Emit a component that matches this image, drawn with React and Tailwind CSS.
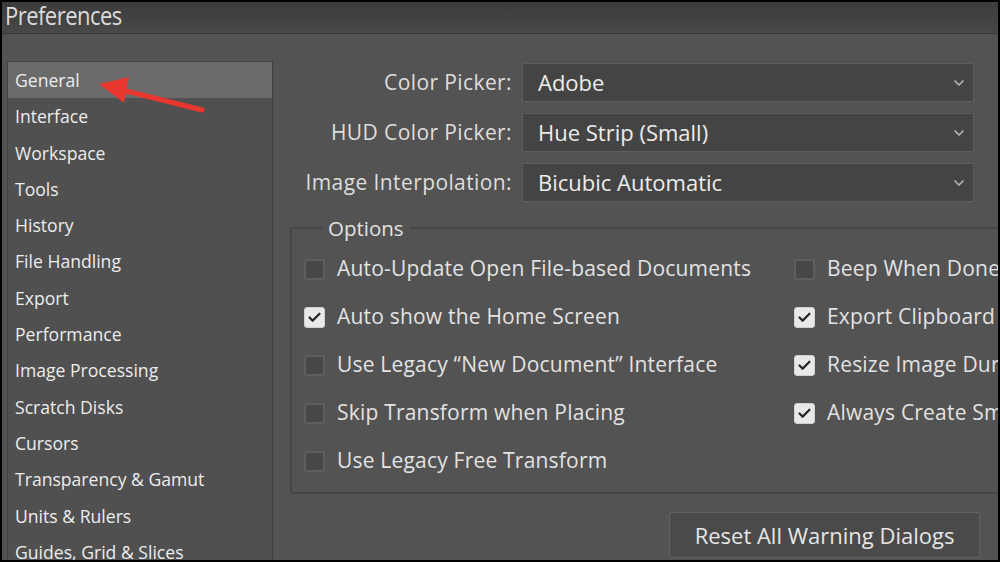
import { ChevronDown, Check } from "lucide-react";

const navItems = [
    "General",
    "Interface",
    "Workspace",
    "Tools",
    "History",
    "File Handling",
    "Export",
    "Performance",
    "Image Processing",
    "Scratch Disks",
    "Cursors",
    "Transparency & Gamut",
    "Units & Rulers",
    "Guides, Grid & Slices",
];

const pickers = [
    { label: "Color Picker:", value: "Adobe" },
    { label: "HUD Color Picker:", value: "Hue Strip (Small)" },
    { label: "Image Interpolation:", value: "Bicubic Automatic" },
];

const leftOptions = [
    { label: "Auto-Update Open File-based Documents", checked: false },
    { label: "Auto show the Home Screen", checked: true },
    { label: "Use Legacy \u201CNew Document\u201D Interface", checked: false },
    { label: "Skip Transform when Placing", checked: false },
    { label: "Use Legacy Free Transform", checked: false },
];

const rightOptions = [
    { label: "Beep When Done", checked: false },
    { label: "Export Clipboard", checked: true },
    { label: "Resize Image During Paste/Place", checked: true },
    { label: "Always Create Smart Objects", checked: true },
];

function Checkbox({ checked }) {
    return checked ? (
        <span className="w-[21px] h-[21px] shrink-0 rounded-[3px] bg-[#e9e9e9] border border-[#d0d0d0] flex items-center justify-center">
            <Check size={15} strokeWidth={3.5} className="text-[#262626]" />
        </span>
    ) : (
        <span className="w-[21px] h-[21px] shrink-0 rounded-[3px] bg-[#474747] border-2 border-[#5e5e5e]"></span>
    );
}

function OptionRow({ label, checked }) {
    return (
        <div className="h-[48px] flex items-center gap-[12px] whitespace-nowrap">
            <Checkbox checked={checked} />
            <span className="text-[21px] tracking-[0.2px] text-[#e2e2e2]">{label}</span>
        </div>
    );
}

export default function App() {
    return (
        <div
            className="relative w-[1000px] h-[562px] bg-black p-[2px] overflow-hidden"
            style={{ fontFamily: '"Open Sans", "Noto Sans", sans-serif' }}
        >
            <div className="w-full h-full flex flex-col bg-[#535353] overflow-hidden">

                {/* TITLE BAR */}
                <div className="h-[32px] shrink-0 bg-gradient-to-b from-[#3c3c3c] to-[#484848] border-b border-[#3a3a3a] flex items-start px-[3px]">
                    <span className="mt-[1px] text-[25px] leading-[24px] tracking-[-0.6px] text-[#dcdcdc] scale-x-[0.88] origin-left">
                        Preferences
                    </span>
                </div>

                {/* BODY */}
                <div className="flex flex-1 min-h-0">

                    {/* SIDEBAR */}
                    <div className="ml-[5px] mt-[27px] w-[266px] shrink-0 bg-[#505050] border-t border-l border-r border-[#444] border-r-[#3f3f3f]">
                        {navItems.map((item, i) => (
                            <div
                                key={item}
                                className={
                                    "h-[36.3px] flex items-center pl-[7px] text-[17.6px] text-[#ececec] whitespace-nowrap " +
                                    (i === 0 ? "bg-[#6a6a6a]" : "")
                                }
                            >
                                {item}
                            </div>
                        ))}
                    </div>

                    {/* CONTENT */}
                    <div className="flex-1 min-w-0 flex flex-col">

                        {/* PICKERS */}
                        <div className="mt-[29px] flex flex-col gap-[11px]">
                            {pickers.map((p) => (
                                <div key={p.label} className="flex items-center gap-[10px]">
                                    <span className="w-[239px] text-right text-[21px] text-[#dedede] whitespace-nowrap tracking-[0.4px]">
                                        {p.label}
                                    </span>
                                    <div className="w-[452px] h-[39px] bg-[#444444] border border-[#5d5d5d] rounded-[2px] flex items-center justify-between pl-[15px] pr-[6px]">
                                        <span className="text-[22px] text-[#ececec]">{p.value}</span>
                                        <ChevronDown size={16} strokeWidth={2.5} className="text-[#b5b5b5]" />
                                    </div>
                                </div>
                            ))}
                        </div>

                        {/* OPTIONS */}
                        <fieldset className="mt-[13px] ml-[17px] w-[800px] border-2 border-[#464646] rounded-[2px] pl-[12px] pb-[7px]">
                            <legend className="ml-[18px] px-[6px] text-[20.5px] leading-[26px] text-[#e2e2e2]">
                                Options
                            </legend>
                            <div className="flex pt-[4px]">
                                <div className="w-[490px] shrink-0">
                                    {leftOptions.map((o) => (
                                        <OptionRow key={o.label} {...o} />
                                    ))}
                                </div>
                                <div>
                                    {rightOptions.map((o) => (
                                        <OptionRow key={o.label} {...o} />
                                    ))}
                                </div>
                            </div>
                        </fieldset>

                        {/* RESET BUTTON */}
                        <div className="mt-[18px] ml-[396px]">
                            <button className="w-[311px] h-[46px] bg-[#4a4a4a] border border-[#626262] rounded-[2px] text-[22px] text-[#e6e6e6]">
                                Reset All Warning Dialogs
                            </button>
                        </div>
                    </div>
                </div>
            </div>

            {/* RED ARROW */}
            <svg className="absolute left-0 top-0 pointer-events-none" width="260" height="140">
                <line x1="202" y1="110" x2="118" y2="89" stroke="#e8372e" strokeWidth="5" strokeLinecap="round" />
                <polygon points="99,84 129,77 124,103" fill="#e8372e" />
            </svg>
        </div>
    );
}
